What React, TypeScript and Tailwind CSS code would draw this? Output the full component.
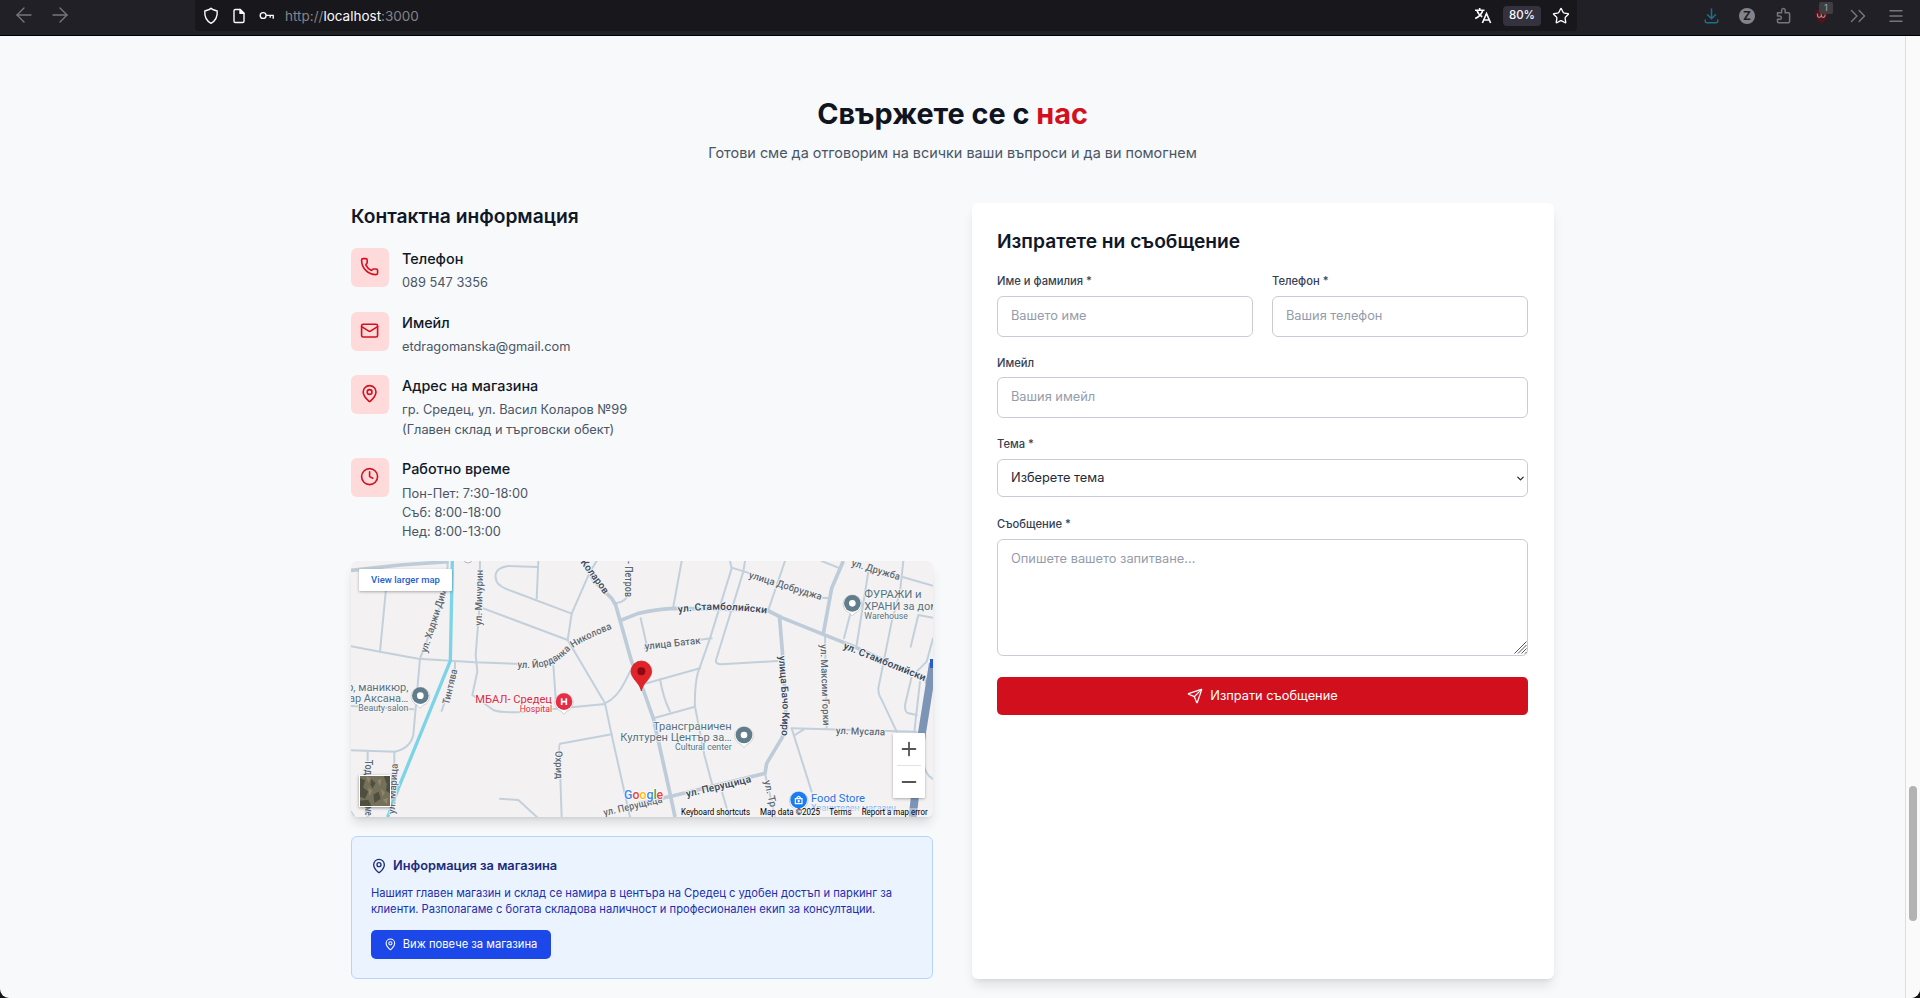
import React from "react";
import { Phone, Mail, MapPin, Clock, Send, ArrowLeft, ArrowRight, ChevronsRight, Menu, Star, ChevronDown, Plus, Minus } from "lucide-react";

function Toolbar() {
  return (
    <header className="flex h-9 shrink-0 items-start border-b border-black bg-[#212026] pl-[12px] text-[#77767d]">
      <div className="flex h-[31px] w-[183px] items-center gap-[12px] pb-px">
        <ArrowLeft className="h-[24px] w-[24px]" strokeWidth={1.4} />
        <ArrowRight className="h-[24px] w-[24px]" strokeWidth={1.4} />
      </div>
      <div className="flex h-[31px] w-[1382px] items-center rounded-b-[4px] bg-[#18171c] pl-[8px] text-[#fbfbfe]">
        <svg className="h-[18px] w-[16px]" viewBox="0 0 16 18" fill="none" stroke="currentColor" strokeWidth="1.4" strokeLinejoin="round">
          <path d="M8 1.3 Q9 2.6 14.2 4 Q14.8 12.5 8 16.4 Q1.200 12.500 1.800 4 Q7 2.600 8 1.300Z" />
        </svg>
        <svg className="ml-[13px] h-[16px] w-[14px]" viewBox="0 0 14 16" fill="none" stroke="currentColor" strokeWidth="1.400" strokeLinejoin="round">
          <path d="M8.200 1.500H3.300Q2 1.500 2 2.800V13.200Q2 14.500 3.300 14.500H10.700Q12 14.500 12 13.200V5.300Z" />
          <path d="M8 1.500V5.400H12Z" fill="currentColor" />
        </svg>
        <svg className="ml-[12px] h-[12px] w-[18px] pb-px" viewBox="0 0 18 12" fill="none" stroke="currentColor" strokeWidth="1.500">
          <circle cx="4.800" cy="6" r="3.200" />
          <path d="M8 5.800H16.500M15.800 5.800V9.500M12.500 5.800V8.500" />
        </svg>
        <span className="ml-[9px] w-[136px] text-[13.5px] leading-[20px] whitespace-nowrap text-[#84838b]">
          http://<span className="text-[#fbfbfe]">localhost</span>:3000
        </span>
        <div className="ml-auto flex items-center pr-[7px]">
          <svg className="h-[17px] w-[18px]" viewBox="0 0 18 17" fill="none" stroke="currentColor" strokeWidth="1.600">
            <path d="M1 3.200H10.500M5.700 1V3.200M8.800 3.200Q7.500 8.500 1.200 11.500M3 3.500Q4.500 8 8.300 9.800" />
            <path d="M8.400 16L12.500 6.500L16.600 16M9.800 13H15.200" />
          </svg>
          <span className="ml-[11px] flex h-[20px] w-[38px] items-center justify-center rounded-[4px] bg-[#34323e] text-[11.5px] font-medium">80%</span>
          <Star className="ml-[11px] h-[18px] w-[18px]" strokeWidth={1.8} />
        </div>
      </div>
      <div className="relative ml-auto flex h-[31px] items-center pr-[15px]">
        <svg className="h-[16px] w-[15px] text-[#1c7188]" viewBox="0 0 15 16" fill="none" stroke="currentColor" strokeWidth="1.500" strokeLinecap="round" strokeLinejoin="round">
          <path d="M7.500 1V10.500M3.500 6.800L7.500 10.600L11.500 6.800M1.200 12V13.200Q1.200 14.800 2.800 14.800H12.200Q13.800 14.800 13.800 13.200V12" />
        </svg>
        <span className="ml-[20px] flex h-[16px] w-[16px] items-center justify-center rounded-full bg-[#84838a] text-[12px] leading-none font-bold text-[#212026]">Z</span>
        <svg className="ml-[21px] h-[17px] w-[15px]" viewBox="0 0 15 17" fill="none" stroke="currentColor" strokeWidth="1.500" strokeLinejoin="round">
          <path d="M1.500 6.200V5.800H5.600V3.300Q5.700 1.500 7.400 1.500T9.200 3.300V5.800H12.400Q13.600 5.800 13.600 7V14.600Q13.600 15.800 12.400 15.800H2.700Q1.500 15.800 1.500 14.600V12.300H3.800Q5.400 12.200 5.400 10.700T3.800 9H1.500Z" />
        </svg>
        <span className="relative ml-[23px]">
          <svg className="h-[16px] w-[15px]" viewBox="0 0 15 16" fill="none">
            <path d="M7.500 0.500Q10 2 14 2Q14.500 11 7.500 15.500Q0.500 11 1 2Q5 2 7.500 0.500Z" fill="#55121b" />
            <path d="M3.500 5.500V7.500Q3.500 9.300 5.300 9.300T7.300 7.500V6M7.300 7.500Q7.500 9.300 9.200 9.300T11 7.500V6.500" stroke="#a88f94" strokeWidth="1.200" />
          </svg>
          <span className="absolute -top-[6px] left-[5px] flex h-[12px] w-[14px] items-center justify-center rounded-[2px] bg-[#3f3f42] text-[9.5px] leading-none text-[#a3a3a6]">1</span>
        </span>
        <ChevronsRight className="ml-[16px] h-[26px] w-[26px]" strokeWidth={1.3} />
        <Menu className="ml-[16px] h-[18px] w-[18px]" strokeWidth={1.8} />
      </div>
    </header>
  );
}

const thinRoads = [
  "M18 274L105 290L220 311L390 322L530 327",
  "M127 60L105 290",
  "M308 18L306 100L225 311L205 540Q195 580 150 590L18 586",
  "M405 18L403 160L392 300L397 350L382 420L445 465Q470 475 540 470L780 447",
  "M577 36L490 33Q440 40 455 80Q463 96 500 108L680 176",
  "M580 18L575 130",
  "M415 160L668 255L780 445L800 540L855 786",
  "M755 18L735 50L680 176L668 255",
  "M812 145Q845 140 850 115",
  "M625 330L632 430",
  "M780 445Q815 430 840 380L860 340",
  "M800 538L645 566Q640 570 645 640L650 786",
  "M465 731L520 735L580 790",
  "M68 590V786", "M148 590V700", "M330 318V350L290 468", "M18 453L205 463",
  "M18 770L30 790",
  "M1010 18L985 155", "M887 190L905 270L900 280",
  "M1155 18L1160 40L1095 250L1058 355Q1048 400 1050 455L1078 600L1102 690",
  "M1200 18L1195 50L1113 315Q1110 327 1130 328L1297 318",
  "M1160 38L1215 55", "M1100 250L1065 254",
  "M1432 128L1455 130",
  "M1320 18L1270 165", "M1430 18L1485 40",
  "M1440 240L1445 520", "M1340 520L1715 530", "M1340 520L1400 710", "M1350 540L1375 524",
  "M1260 655L1290 786",
  "M905 385L1065 340", "M945 372Q955 430 975 470", "M925 490L1050 455",
  "M1675 18L1665 110L1640 200L1600 400Q1600 420 1608 430L1655 530",
  "M1670 65L1764 92", "M1570 50L1535 270", "M1515 180L1497 250",
  "M1764 188L1720 180L1697 275",
  "M1764 250L1745 320L1700 365L1680 450Q1680 472 1688 474L1715 480",
  "M1725 380L1708 530", "M1125 690L1153 786", "M1735 620Q1740 660 1764 672",
];

const wideRoads = [
  "M18 46L165 30L310 20",
  "M715 18L745 75L800 130L812 150L860 320L895 405L925 490L975 715L990 786",
  "M822 198L880 175Q940 162 990 160L1265 165L1310 188L1435 238L1520 272L1740 370L1755 405",
  "M1495 18L1460 100L1435 235",
  "M1303 180L1313 300L1325 520L1310 550L1265 625L1260 655L985 722L880 745",
];

type LabelSpec = { d: string; len: number; text: string; strong?: boolean };

const labels: LabelSpec[] = [
  { d: "M245 295L308 98", len: 200, text: "ул. Хаджи Дим" },
  { d: "M410 212L414 40", len: 167, text: "ул. Мичурин" },
  { d: "M312 450L340 335", len: 108, text: "Тинтява" },
  { d: "M706 22L792 138", len: 120, text: "Коларов", strong: true },
  { d: "M841 18V130", len: 108, text: "- Петров" },
  { d: "M517 338C600 345 635 325 672 288C700 262 760 240 825 210", len: 316, text: "ул. Йорданка Николова" },
  { d: "M631 588L633 682", len: 84, text: "Охрид" },
  { d: "M60 614V665", len: 46, text: "Тод" },
  { d: "M60 742V790", len: 40, text: "оме" },
  { d: "M149 778L159 615", len: 152, text: "ул. Марица" },
  { d: "M778 783L980 736", len: 180, text: "ул. Перущица" },
  { d: "M1000 173Q1130 153 1290 180", len: 266, text: "ул. Стамболийски", strong: true },
  { d: "M1210 68L1445 141", len: 227, text: "улица Добруджа" },
  { d: "M1518 32L1690 84", len: 150, text: "ул. Дружба" },
  { d: "M900 284L1085 264", len: 169, text: "улица Батак" },
  { d: "M1301 303L1313 460L1308 570", len: 240, text: "улица Бачо Киро", strong: true },
  { d: "M1426 268L1435 535", len: 244, text: "ул. Максим Горки" },
  { d: "M1493 280L1762 388", len: 264, text: "ул. Стамболийски", strong: true },
  { d: "M1472 537L1645 542", len: 148, text: "ул. Мусала" },
  { d: "M1025 727L1245 675", len: 200, text: "ул. Перущица", strong: true },
  { d: "M1257 678L1285 795", len: 82, text: "ул. Тр" },
];

function Pin({ x, y, color, children }: { x: number; y: number; color: string; children?: React.ReactNode }) {
  return (
    <g transform={`translate(${x} ${y})`}>
      <path d="M-28 3Q-26 22 -8 29L0 38L8 29Q26 22 28 3A28 28 0 0 0 -28 3Z" fill="#fff" stroke="#b9bec4" strokeWidth="2" />
      <circle r="25" fill={color} />
      {children ?? <circle r="10" fill="#fff" />}
    </g>
  );
}

function MapDrawing() {
  return (
    <svg className="block h-full w-full" viewBox="18 18 1746 768" preserveAspectRatio="none" fontFamily="Roboto, sans-serif">
      <rect x="18" y="18" width="1746" height="768" fill="#f3f1f2" />
      <g fill="none" stroke="#c2d0dc" strokeWidth="6" strokeLinejoin="round" strokeLinecap="round">
        {thinRoads.map((d) => <path key={d} d={d} />)}
      </g>
      <g fill="none" stroke="#bdccd8" strokeWidth="11" strokeLinejoin="round">
        {wideRoads.map((d) => <path key={d} d={d} />)}
      </g>
      <circle cx="369" cy="12" r="12" fill="#fff" stroke="#adb3b9" strokeWidth="3" />
      <path d="M1764 325L1730 540L1703 786" fill="none" stroke="#7c95b7" strokeWidth="24" />
      <rect x="1755" y="312" width="12" height="27" fill="#285dc9" />
      <path d="M322 18L316 318L160 700L128 786" fill="none" stroke="#7dd3e8" strokeWidth="10" />
      <g stroke="#f6f6f7" strokeWidth="5" strokeLinejoin="round" paintOrder="stroke">
        {labels.map((l, i) => (
          <g key={l.d}>
            <path id={`street-${i}`} d={l.d} fill="none" stroke="none" />
            <text fontSize="30" fontWeight={l.strong ? 600 : 500} fill={l.strong ? "#3d4d5f" : "#5f6872"} textLength={l.len} lengthAdjust="spacingAndGlyphs">
              <textPath href={`#street-${i}`} textLength={l.len} lengthAdjust="spacingAndGlyphs">{l.text}</textPath>
            </text>
          </g>
        ))}
        <g fill="#567280" fontSize="33">
          <g textAnchor="end">
            <text x="190" y="408">ер, маникюр,</text>
            <text x="190" y="440">нар Аксана…</text>
            <text x="190" y="468" fontSize="27" textLength="150" lengthAdjust="spacingAndGlyphs">Beauty salon</text>
            <text x="1160" y="524" textLength="236" lengthAdjust="spacingAndGlyphs">Трансграничен</text>
            <text x="1160" y="558" textLength="334" lengthAdjust="spacingAndGlyphs">Културен Център за…</text>
            <text x="1160" y="586" fontSize="27" textLength="170" lengthAdjust="spacingAndGlyphs">Cultural center</text>
          </g>
          <text x="1558" y="130" textLength="172" lengthAdjust="spacingAndGlyphs">ФУРАЖИ и</text>
          <text x="1558" y="164">ХРАНИ за дома</text>
          <text x="1558" y="192" fontSize="27" textLength="131" lengthAdjust="spacingAndGlyphs">Warehouse</text>
        </g>
        <g fill="#df2940" textAnchor="end">
          <text x="621" y="443" fontSize="33" textLength="230" lengthAdjust="spacingAndGlyphs">МБАЛ- Средец</text>
          <text x="621" y="471" fontSize="27" textLength="97" lengthAdjust="spacingAndGlyphs">Hospital</text>
        </g>
        <text x="1398" y="741" fontSize="33" fill="#1b74e4" textLength="162" lengthAdjust="spacingAndGlyphs">Food Store</text>
        <text x="1398" y="767" fontSize="28" fill="#7fb0f0" textLength="255" lengthAdjust="spacingAndGlyphs">Хранителен магазин</text>
      </g>
      <Pin x={226} y={422} color="#617d8b" />
      <Pin x={1197} y={540} color="#617d8b" />
      <Pin x={1522} y={145} color="#617d8b" />
      <Pin x={657} y={440} color="#e72d43">
        <path d="M-7 -10V10M7 -10V10M-7 0H7" stroke="#fff" strokeWidth="5" />
      </Pin>
      <Pin x={1361} y={735} color="#1a7cf3">
        <path d="M-10 -4H10V11H-10ZM-5 -4V-7Q0 -15 5 -7V-4" fill="none" stroke="#fff" strokeWidth="3.500" />
        <rect x="-3" y="0" width="6" height="7" fill="#fff" />
      </Pin>
      <path d="M889 318A31 31 0 0 0 858 349C858 372 884 382 889 408C894 382 920 372 920 349A31 31 0 0 0 889 318Z" fill="#e1242a" stroke="#c5141f" strokeWidth="2" />
      <circle cx="889" cy="349" r="12" fill="#8b0a12" />
      <text x="837" y="731" fontSize="37" fontWeight="500" stroke="#fff" strokeWidth="4" paintOrder="stroke">
        <tspan fill="#4285f4">G</tspan><tspan fill="#ea4335">o</tspan><tspan fill="#fbbc05">o</tspan><tspan fill="#4285f4">g</tspan><tspan fill="#34a853">l</tspan><tspan fill="#ea4335">e</tspan>
      </text>
      <rect x="998" y="759" width="766" height="27" fill="#f5f5f5" fillOpacity="0.4" />
      <g fontSize="25" fill="#000">
        <text x="1008" y="780" textLength="207" lengthAdjust="spacingAndGlyphs">Keyboard shortcuts</text>
        <text x="1245" y="780" textLength="180" lengthAdjust="spacingAndGlyphs">Map data ©2025</text>
        <text x="1453" y="780" textLength="67" lengthAdjust="spacingAndGlyphs">Terms</text>
        <text x="1550" y="780" textLength="198" lengthAdjust="spacingAndGlyphs">Report a map error</text>
      </g>
    </svg>
  );
}

function SatelliteThumb() {
  return (
    <svg className="block h-full w-full" viewBox="0 0 29 29">
      <rect width="29" height="29" fill="#75705a" />
      <g fill="#4f4f40">
        <path d="M0 2L5 4L3 11L8 15L5 22L0 20Z" /><path d="M23 0H29V17L25 14L26 8Z" /><path d="M11 3L15 7L12 12L10 8Z" /><path d="M13 18L18 15L20 22L14 26Z" /><path d="M0 24L8 23L11 29H0Z" />
      </g>
      <g fill="#8f866b">
        <path d="M6 0L10 2L8 7Z" /><path d="M17 4L21 3L19 10Z" /><path d="M8 11L12 14L9 20Z" /><path d="M20 12L24 16L22 20Z" /><path d="M22 23L27 21L26 27Z" />
      </g>
    </svg>
  );
}

function MapPanel() {
  return (
    <div className="relative h-[256px] overflow-hidden rounded-[6px] shadow-[0_8px_12px_-2px_rgba(0,0,0,0.12),0_3px_5px_-3px_rgba(0,0,0,0.12)]">
      <MapDrawing />
      <div className="absolute top-[8px] left-[8px] flex h-[22px] w-[93px] items-center justify-center rounded-[1px] bg-white font-[Roboto,sans-serif] text-[9.5px] font-medium whitespace-nowrap text-[#1b5fd4] shadow-[0_1px_3px_rgba(0,0,0,0.3)]">
        View larger map
      </div>
      <div className="absolute bottom-[10px] left-[8px] h-[32px] w-[32px] border border-white shadow-[0_1px_3px_rgba(0,0,0,0.4)]">
        <SatelliteThumb />
      </div>
      <div className="absolute right-[8px] bottom-[19px] flex h-[65px] w-[32px] flex-col items-center rounded-[1px] bg-white text-[#555] shadow-[0_1px_3px_rgba(0,0,0,0.3)]">
        <div className="flex h-[32px] items-center"><Plus className="h-[22px] w-[22px]" strokeWidth={2} /></div>
        <div className="h-px w-[24px] bg-[#e2e2e2]" />
        <div className="flex h-[32px] items-center"><Minus className="h-[22px] w-[22px]" strokeWidth={2} /></div>
      </div>
    </div>
  );
}

type IconType = React.ComponentType<{ className?: string; strokeWidth?: number }>;

function ContactItem({ icon: Icon, title, height, children }: { icon: IconType; title: string; height: string; children: React.ReactNode }) {
  return (
    <div className={`flex ${height}`}>
      <div className="flex h-[39px] w-[38px] shrink-0 items-center justify-center rounded-[6px] bg-[#fedada] pb-[1.5px] text-[#d4101f]">
        <Icon className="h-[19.2px] w-[19.2px]" strokeWidth={2} />
      </div>
      <div className="ml-[13px]">
        <h4 className="h-[24px] text-[14.4px] leading-[21px] font-medium text-[#101828]">{title}</h4>
        <div className="text-[12.8px] text-[#4a5565]">{children}</div>
      </div>
    </div>
  );
}

const fieldClass = "block w-full rounded-[6px] border border-[#c9cbd8] bg-white px-[13px] text-[12.8px] text-[#1e2939] placeholder:text-[#949cab] outline-none";

function Label({ children }: { children: React.ReactNode }) {
  return <label className="block h-[23px] text-[11.2px] leading-[17px] font-medium text-[#364153]">{children}</label>;
}

function ContactForm() {
  return (
    <form className="flex h-[776px] flex-col rounded-[6px] bg-white px-[26px] pt-[25px] pl-[25px] shadow-[0_8px_12px_-2px_rgba(0,0,0,0.10),0_3px_5px_-3px_rgba(0,0,0,0.10)]">
      <h3 className="h-[45px] text-[19.2px] leading-[26px] font-semibold text-[#101828]">Изпратете ни съобщение</h3>
      <div className="grid h-[81px] grid-cols-2 gap-[19px]">
        <div>
          <Label>Име и фамилия *</Label>
          <input className={`${fieldClass} h-[41px] pb-[2px]`} placeholder="Вашето име" />
        </div>
        <div>
          <Label>Телефон *</Label>
          <input className={`${fieldClass} h-[41px] pb-[2px]`} placeholder="Вашия телефон" />
        </div>
      </div>
      <div className="h-[82px]">
        <Label><span className="relative top-px">Имейл</span></Label>
        <input className={`${fieldClass} h-[41px] pb-[2px]`} placeholder="Вашия имейл" />
      </div>
      <div className="h-[80px]">
        <Label>Тема *</Label>
        <div className="relative">
          <select className={`${fieldClass} h-[38px] appearance-none`}>
            <option>Изберете тема</option>
          </select>
          <ChevronDown className="absolute top-[14px] right-[2px] h-[11px] w-[11px] text-[#1e2939]" strokeWidth={2.8} />
        </div>
      </div>
      <div className="h-[161px]">
        <Label>Съобщение *</Label>
        <div className="relative">
          <textarea className={`${fieldClass} h-[117px] resize-none py-[9px] leading-[19px]`} placeholder="Опишете вашето запитване..." />
          <svg className="absolute right-[1px] bottom-[2px] h-[13px] w-[13px]" viewBox="0 0 13 13" stroke="#55555b" strokeWidth="1">
            <path d="M0.500 12.500L12.500 0.500M4 12.500L12.500 4M7.500 12.500L12.500 7.500M11 12.500L12.500 11" />
          </svg>
        </div>
      </div>
      <button type="button" className="flex h-[38px] items-center justify-center gap-[7px] rounded-[5px] bg-[#d20f1d] text-[12.8px] text-white">
        <Send className="h-[16px] w-[16px]" strokeWidth={1.8} />
        Изпрати съобщение
      </button>
    </form>
  );
}

function StoreInfo() {
  return (
    <section className="mt-[19px] h-[143px] rounded-[6px] border border-[#b5d5ff] bg-[#ebf3ff] px-[19px]">
      <h4 className="mt-[19px] flex h-[20px] items-center gap-[6px] text-[12.8px] font-semibold text-[#1c2c7c]">
        <MapPin className="h-[16px] w-[16px]" strokeWidth={2} />
        Информация за магазина
      </h4>
      <p className="mt-[9px] text-[11.2px] leading-[16.4px] whitespace-nowrap text-[#1d2fae]">
        Нашият главен магазин и склад се намира в центъра на Средец с удобен достъп и паркинг за<br />
        клиенти. Разполагаме с богата складова наличност и професионален екип за консултации.
      </p>
      <button type="button" className="mt-[12px] flex h-[29px] w-[180px] items-center gap-[6px] rounded-[5px] bg-[#1c47e9] pl-[13px] text-[11.2px] whitespace-nowrap text-white">
        <MapPin className="h-[12.8px] w-[12.8px]" strokeWidth={2} />
        Виж повече за магазина
      </button>
    </section>
  );
}

export default function App() {
  return (
    <div className="h-[998px] w-full overflow-hidden bg-[#151515] font-[Inter,sans-serif]">
      <div className="flex h-full flex-col overflow-hidden rounded-b-[9px] bg-[#f7f9fb]">
        <Toolbar />
        <div className="flex min-h-0 flex-1">
          <main className="flex w-[1905px] flex-col items-center">
            <h2 className="mt-[60px] text-[28.8px] leading-[36px] font-bold text-[#101420]">
              Свържете се с <span className="text-[#d4101f]">нас</span>
            </h2>
            <p className="mt-[9px] text-[14.4px] leading-[24px] text-[#4a5565]">Готови сме да отговорим на всички ваши въпроси и да ви помогнем</p>
            <div className="mt-[38px] grid w-[1203px] grid-cols-2 gap-[39px]">
              <div>
                <h3 className="h-[45px] text-[19.2px] leading-[26px] font-semibold text-[#101828]">Контактна информация</h3>
                <ContactItem icon={Phone} title="Телефон" height="h-[64px]">
                  <p className="leading-[21px]">089 547 3356</p>
                </ContactItem>
                <ContactItem icon={Mail} title="Имейл" height="h-[63px]">
                  <p className="leading-[21px]">etdragomanska@gmail.com</p>
                </ContactItem>
                <ContactItem icon={MapPin} title="Адрес на магазина" height="h-[83px]">
                  <p className="pt-px leading-[20px]">гр. Средец, ул. Васил Коларов №99<br />(Главен склад и търговски обект)</p>
                </ContactItem>
                <ContactItem icon={Clock} title="Работно време" height="h-[103px]">
                  <p className="pt-[2px] leading-[19px]">Пон-Пет: 7:30-18:00<br />Съб: 8:00-18:00<br />Нед: 8:00-13:00</p>
                </ContactItem>
                <MapPanel />
                <StoreInfo />
              </div>
              <ContactForm />
            </div>
          </main>
          <aside className="flex w-[15px] justify-center border-l border-[#dedee0] bg-[#fafafa] pt-[750px]">
            <div className="h-[135px] w-[8px] rounded-full bg-[#b3b3b3]" />
          </aside>
        </div>
      </div>
    </div>
  );
}
